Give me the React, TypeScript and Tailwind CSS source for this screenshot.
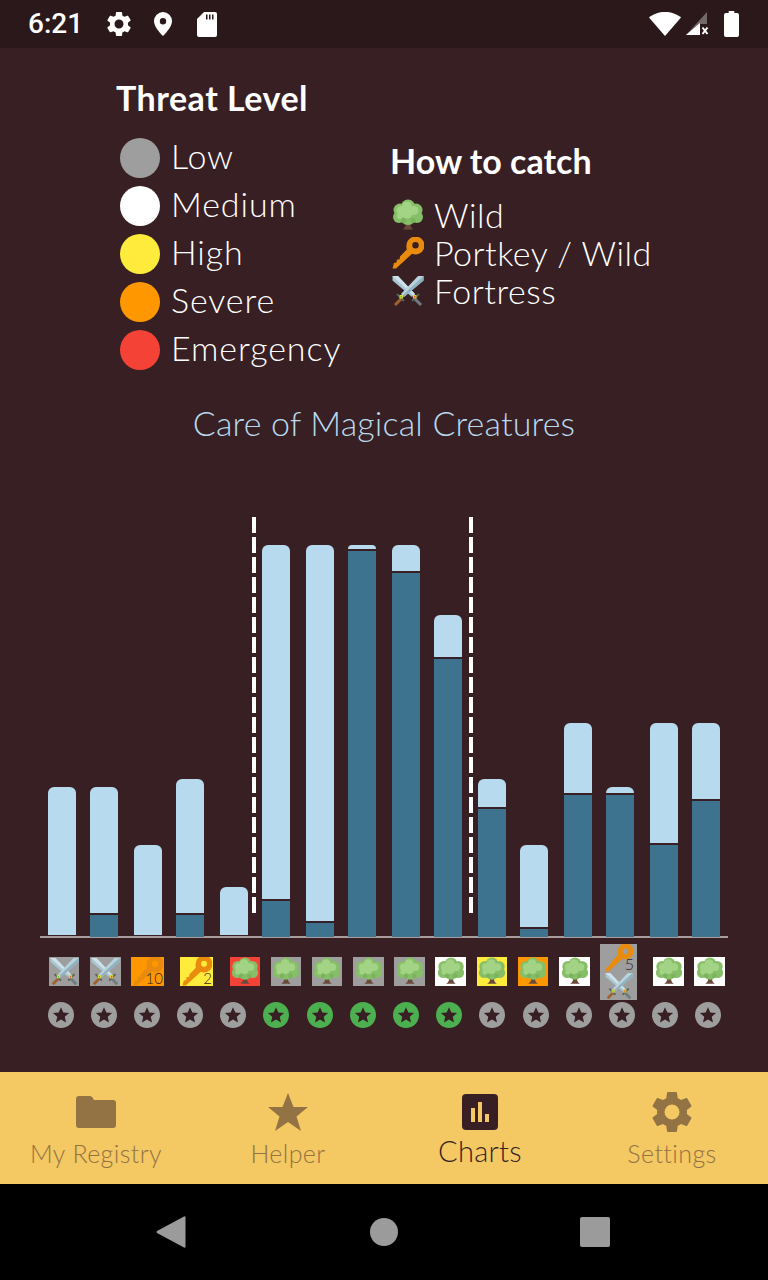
import React from "react";

const F = "font-['Lato','Liberation_Sans',sans-serif]";

function Tree({ s = 32 }: { s?: number }) {
  return (
    <svg width={s} height={s} viewBox="0 0 32 32">
      <path d="M14 20 L13.600 27 Q12.500 29.500 10.500 30.500 L21.500 30.500 Q19.500 29.500 18.600 27 L18 20 Z" fill="#6b4a3e" />
      <g fill="#86bf68">
        <circle cx="16" cy="7.500" r="7" />
        <circle cx="8" cy="11" r="6.500" />
        <circle cx="24" cy="11" r="6.500" />
        <circle cx="7" cy="18" r="6" />
        <circle cx="25" cy="18" r="6" />
        <circle cx="16" cy="18" r="8" />
      </g>
      <g fill="#a3d384">
        <circle cx="15" cy="7.500" r="5" />
        <circle cx="9" cy="11.500" r="4.500" />
        <circle cx="22" cy="11.500" r="4.500" />
        <circle cx="15" cy="14" r="5.500" />
        <circle cx="8" cy="17" r="3" />
      </g>
      <circle cx="11.500" cy="21.500" r="2.500" fill="#7bb25d" />
      <circle cx="21" cy="21.500" r="2.500" fill="#7bb25d" />
    </svg>
  );
}

function Key({ s = 32 }: { s?: number }) {
  return (
    <svg width={s} height={s} viewBox="0 0 32 32">
      <path
        fillRule="evenodd"
        d="M14.500 8.500A9 9 0 1 1 20 16.800L4 31.500L0.500 31.500L2 26L4.500 25.500L5 22.500L7.500 22.500L8 19.500L14.800 12.500A9 9 0 0 1 14.500 8.500ZM23.500 5A3.200 3.200 0 1 0 23.500 11.400A3.200 3.200 0 0 0 23.500 5Z"
        fill="#e98b0d"
      />
    </svg>
  );
}

function Swords({ s = 32 }: { s?: number }) {
  return (
    <svg width={s} height={s} viewBox="0 0 32 32">
      <path d="M0.500 1 L6 1 L23 19 L20 22 L0.500 5.500 Z" fill="#a9c6d2" />
      <path d="M0.500 1 L6 1 L23 19 L21.500 20.500 Z" fill="#cfe2ea" />
      <path d="M31.500 1 L26 1 L9 19 L12 22 L31.500 5.500 Z" fill="#b9d3dd" />
      <path d="M31.500 1 L31.500 5.500 L12 22 L10.500 20.500 Z" fill="#8fb0be" />
      <path d="M5 19 L12 26" stroke="#56605f" strokeWidth="2" />
      <path d="M27 19 L20 26" stroke="#56605f" strokeWidth="2" />
      <path d="M9 24 L3 30" stroke="#a0622d" strokeWidth="3" />
      <path d="M23 24 L29 30" stroke="#6f7b7f" strokeWidth="3" />
      <rect x="7.500" y="20" width="3.500" height="3.500" fill="#dfe23a" />
      <rect x="8.600" y="21.100" width="1.400" height="1.400" fill="#4caf50" />
      <rect x="21" y="20" width="3.500" height="3.500" fill="#e8d22e" />
      <rect x="22.100" y="21.100" width="1.400" height="1.400" fill="#e53935" />
    </svg>
  );
}

function Gear({ s = 24, c = "#fff" }: { s?: number; c?: string }) {
  return (
    <svg width={s} height={s} viewBox="0 0 24 24" fill={c} className="shrink-0">
      <path d="M19.140 12.940c.04-.3.06-.61.06-.94s-.02-.64-.07-.94l2.030-1.580a.49.49 0 0 0 .12-.61l-1.920-3.320a.49.49 0 0 0-.59-.22l-2.390.96a7 7 0 0 0-1.620-.94l-.36-2.540a.48.48 0 0 0-.48-.41h-3.840a.48.48 0 0 0-.47.41l-.36 2.540c-.59.24-1.130.57-1.620.94l-2.390-.96a.49.49 0 0 0-.59.22L2.740 8.870a.48.48 0 0 0 .12.61l2.030 1.580c-.05.3-.09.63-.09.94s.02.64.07.94l-2.030 1.580a.49.49 0 0 0-.12.61l1.920 3.320c.12.22.37.29.59.22l2.390-.96c.5.38 1.030.7 1.620.94l.36 2.540c.05.24.24.41.48.41h3.840c.24 0 .44-.17.47-.41l.36-2.540c.59-.24 1.130-.56 1.620-.94l2.390.96c.22.08.47 0 .59-.22l1.920-3.320a.48.48 0 0 0-.12-.61l-2.010-1.580zM12 15.600A3.600 3.600 0 1 1 12 8.400a3.600 3.600 0 0 1 0 7.200z" />
    </svg>
  );
}

const bars = [
  { top: 787, lightEnd: 935, dark: 937 },
  { top: 787, lightEnd: 913, dark: 915 },
  { top: 845, lightEnd: 935, dark: 937 },
  { top: 779, lightEnd: 913, dark: 915 },
  { top: 887, lightEnd: 935, dark: 937 },
  { top: 545, lightEnd: 899, dark: 901 },
  { top: 545, lightEnd: 921, dark: 923 },
  { top: 545, lightEnd: 549, dark: 551 },
  { top: 545, lightEnd: 571, dark: 573 },
  { top: 615, lightEnd: 657, dark: 659 },
  { top: 779, lightEnd: 807, dark: 809 },
  { top: 845, lightEnd: 927, dark: 929 },
  { top: 723, lightEnd: 793, dark: 795 },
  { top: 787, lightEnd: 793, dark: 795 },
  { top: 723, lightEnd: 843, dark: 845 },
  { top: 723, lightEnd: 799, dark: 801 },
];

const GREY = "#9e9e9e";
const cells: { bg: string; icon: "s" | "t" | "k" | "ks"; n?: string; w: number; ml: number }[] = [
  { bg: GREY, icon: "s", w: 30, ml: 49 },
  { bg: GREY, icon: "s", w: 31, ml: 11 },
  { bg: "#ff9800", icon: "k", n: "10", w: 33, ml: 10 },
  { bg: "#ffeb3b", icon: "k", n: "2", w: 33, ml: 16 },
  { bg: "#f44336", icon: "t", w: 30, ml: 17 },
  { bg: GREY, icon: "t", w: 30, ml: 11 },
  { bg: GREY, icon: "t", w: 30, ml: 11 },
  { bg: GREY, icon: "t", w: 31, ml: 11 },
  { bg: GREY, icon: "t", w: 31, ml: 10 },
  { bg: "#ffffff", icon: "t", w: 31, ml: 10 },
  { bg: "#ffeb3b", icon: "t", w: 30, ml: 11 },
  { bg: "#ff9800", icon: "t", w: 30, ml: 11 },
  { bg: "#ffffff", icon: "t", w: 31, ml: 11 },
  { bg: GREY, icon: "ks", n: "5", w: 37, ml: 10 },
  { bg: "#ffffff", icon: "t", w: 31, ml: 16 },
  { bg: "#ffffff", icon: "t", w: 31, ml: 10 },
];

function Cell({ c }: { c: (typeof cells)[number] }) {
  if (c.icon === "ks") {
    return (
      <div className="relative mt-[1px] flex h-[56px] shrink-0 flex-col items-center bg-[#9e9e9e]" style={{ width: c.w, marginLeft: c.ml }}>
        <Key s={28} />
        <span className={`absolute right-[3px] top-[12px] text-[16px] font-light leading-none text-[#371f23] ${F}`}>{c.n}</span>
        <Swords s={28} />
      </div>
    );
  }
  return (
    <div className="relative flex h-[29px] shrink-0 items-center justify-center overflow-hidden" style={{ background: c.bg, width: c.w, marginLeft: c.ml }}>
      {c.icon === "s" && <Swords s={29} />}
      {c.icon === "t" && <Tree s={28} />}
      {c.icon === "k" && <Key s={30} />}
      {c.n && <span className={`absolute bottom-0 right-[1px] text-[15px] font-light leading-[16px] text-[#371f23] ${F}`}>{c.n}</span>}
    </div>
  );
}

function Star({ green }: { green: boolean }) {
  return (
    <div className={`flex h-[26px] w-[26px] items-center justify-center rounded-full ${green ? "bg-[#4caf50]" : "bg-[#9e9e9e]"}`}>
      <svg width="18" height="18" viewBox="0 0 24 24" fill="#371f23">
        <path d="M12 1.500l3.100 7.100 7.700.7-5.800 5.100 1.700 7.600L12 18l-6.700 4 1.700-7.600-5.800-5.100 7.700-.7z" />
      </svg>
    </div>
  );
}

function Tab({ label, icon, active }: { label: string; icon: React.ReactNode; active?: boolean }) {
  return (
    <div className={`flex h-full w-[192px] flex-col items-center pt-[20px] ${active ? "text-[#371f23]" : "text-[#937344]"}`}>
      <div className="flex h-[40px] items-center justify-center">{icon}</div>
      <span className={`${active ? "mt-[3px] text-[29px] tracking-[0.3px]" : "mt-[5px] text-[25px] tracking-[0.4px]"} leading-[32px] font-light ${F}`}>{label}</span>
    </div>
  );
}

const legend = [
  ["Low", "#9e9e9e"],
  ["Medium", "#ffffff"],
  ["High", "#ffeb3b"],
  ["Severe", "#ff9800"],
  ["Emergency", "#f44336"],
];

export default function App() {
  return (
    <div className={`flex h-[1280px] w-[768px] flex-col overflow-hidden bg-[#371f23] text-white ${F}`}>
      {/* status bar */}
      <div className="flex h-[48px] shrink-0 items-center bg-[#2a181b] pl-[28px] pr-[29px]">
        <span className="w-[53px] text-[28px] font-medium leading-none font-['Roboto',sans-serif]">6:21</span>
        <div className="ml-[23px]">
          <Gear s={30} />
        </div>
        <svg width="20" height="26" viewBox="0 0 20 26" fill="#fff" className="ml-[19px]">
          <path fillRule="evenodd" d="M10 1a9 9 0 0 1 9 9c0 5-5 11-9 15-4-4-9-10-9-15a9 9 0 0 1 9-9zm0 6a3.200 3.200 0 1 0 0 6.400a3.200 3.200 0 0 0 0-6.400z" />
        </svg>
        <svg width="22" height="26" viewBox="0 0 22 26" className="ml-[23px]">
          <path d="M8 1h11a2 2 0 0 1 2 2v21a2 2 0 0 1-2 2H3a2 2 0 0 1-2-2V8z" fill="#fff" />
          <path d="M10 3.500h1.500v5H10zM13 3.500h1.500v5H13zM16 3.500h1.500v5H16z" fill="#2a181b" />
        </svg>
        <div className="ml-auto flex items-center">
          <svg width="32" height="24" viewBox="0 0 32 24" fill="#fff">
            <path d="M0 5.500C4 2 10 0 16 0s12 2 16 5.500L16 24z" />
          </svg>
          <svg width="24" height="24" viewBox="0 0 24 24" className="ml-[5px]">
            <path d="M21 0V12H14V23H0Z" fill="#fff" fillOpacity="0.35" />
            <path d="M14 11V23H0Z" fill="#fff" />
            <path d="M16.500 15.500l5 6.500m0-6.500l-5 6.500" stroke="#fff" strokeWidth="2" />
          </svg>
          <svg width="15" height="26" viewBox="0 0 16 26" preserveAspectRatio="none" fill="#fff" className="ml-[14px]">
            <path d="M5 0h6v2h3a2 2 0 0 1 2 2v20a2 2 0 0 1-2 2H2a2 2 0 0 1-2-2V4a2 2 0 0 1 2-2h3z" />
          </svg>
        </div>
      </div>

      {/* legends */}
      <div className="relative h-[350px] shrink-0">
        <div className="absolute left-[116px] top-[29px] text-[34px] font-bold leading-[42px] tracking-[0.5px]">Threat Level</div>
        <div className="absolute left-[120px] top-[86px] flex flex-col">
          {legend.map(([l, c]) => (
            <div key={l} className="flex h-[48px] items-center gap-[11px]">
              <div className="h-[40px] w-[40px] rounded-full" style={{ background: c }} />
              <span className="relative -top-[2px] text-[34px] font-light leading-none tracking-[0.9px]">{l}</span>
            </div>
          ))}
        </div>
        <div className="absolute left-[390px] top-[92px] text-[34px] font-bold leading-[42px]">How to catch</div>
        <div className="absolute left-[392px] top-[148px] flex flex-col">
          {[
            [<Tree s={32} />, "Wild"],
            [<Key s={32} />, "Portkey / Wild"],
            [<Swords s={32} />, "Fortress"],
          ].map(([i, t], k) => (
            <div key={k} className="flex h-[38px] items-center gap-[10px]">
              {i}
              <span className="text-[34px] font-light leading-none tracking-[0.5px]">{t}</span>
            </div>
          ))}
        </div>
      </div>

      <div className="h-[50px] shrink-0 text-center text-[34px] font-light leading-[50px] tracking-[0.15px] text-[#b8daee]">Care of Magical Creatures</div>

      {/* chart */}
      <div className="relative mt-[52px] h-[488px] shrink-0">
        <div className="absolute left-[252.3px] top-[17px] h-[396px] w-[4px] bg-[repeating-linear-gradient(to_bottom,#fff_0,#fff_16px,transparent_16px,transparent_20px)]" />
        <div className="absolute left-[468.5px] top-[17px] h-[396px] w-[4px] bg-[repeating-linear-gradient(to_bottom,#fff_0,#fff_16px,transparent_16px,transparent_20px)]" />
        <div className="flex h-[437px] items-end pl-[32px]">
          {bars.map((b, i) => (
            <div key={i} className="flex w-[28px] flex-col odd:ml-[16px] even:ml-[14px]">
              <div className="rounded-t-[6px] bg-[#b8daee]" style={{ height: b.lightEnd - b.top }} />
              <div className="mt-[2px] bg-[#3d738f]" style={{ height: 937 - b.dark }} />
            </div>
          ))}
        </div>
        <div className="mx-[40px] -mt-[1px] h-[2px] bg-[#a89c9c]" />
        <div className="mt-[19px] flex h-[28px] items-center">
          {cells.map((c, i) => (
            <Cell key={i} c={c} />
          ))}
        </div>
        <div className="mt-[17px] flex justify-between pl-[47.500px] pr-[46.500px]">
          {bars.map((_, i) => (
            <Star key={i} green={i >= 5 && i <= 9} />
          ))}
        </div>
      </div>

      <div className="flex-1" />

      {/* bottom tabs */}
      <div className="flex h-[112px] shrink-0 bg-[#f4c862]">
        <Tab
          label="My Registry"
          icon={
            <svg width="40" height="32" viewBox="0 0 40 32" fill="#937344">
              <path d="M3 0h11a3 3 0 0 1 2.500 1.500L18 4h19a3 3 0 0 1 3 3v22a3 3 0 0 1-3 3H3a3 3 0 0 1-3-3V3a3 3 0 0 1 3-3z" />
            </svg>
          }
        />
        <Tab
          label="Helper"
          icon={
            <svg width="40" height="38" viewBox="0 0 40 38" fill="#937344">
              <path d="M20 0l5.500 14H40L28.500 23.500 33 38 20 29 7 38 11.500 23.500 0 14h14.500z" />
            </svg>
          }
        />
        <Tab
          active
          label="Charts"
          icon={
            <div className="flex h-[36px] w-[36px] items-end justify-center gap-[3px] rounded-[4px] bg-[#371f23] pb-[8px]">
              <div className="h-[14px] w-[4px] bg-[#f4c862]" />
              <div className="h-[20px] w-[4px] bg-[#f4c862]" />
              <div className="h-[8px] w-[4px] bg-[#f4c862]" />
            </div>
          }
        />
        <Tab label="Settings" icon={<Gear s={50} c="#937344" />} />
      </div>

      {/* nav bar */}
      <div className="flex h-[96px] shrink-0 items-center bg-black pl-[156px]">
        <svg width="30" height="32" viewBox="0 0 30 34" preserveAspectRatio="none" fill="#9b9b9b" className="mr-[184px]">
          <path d="M28 0.500a1 1 0 0 1 1.500 1v31a1 1 0 0 1-1.500 1L1 18a1.500 1.500 0 0 1 0-2z" />
        </svg>
        <div className="h-[28px] w-[28px] rounded-full bg-[#9b9b9b]" />
        <div className="ml-[182px] h-[30px] w-[30px] rounded-[2px] bg-[#9b9b9b]" />
      </div>
    </div>
  );
}
